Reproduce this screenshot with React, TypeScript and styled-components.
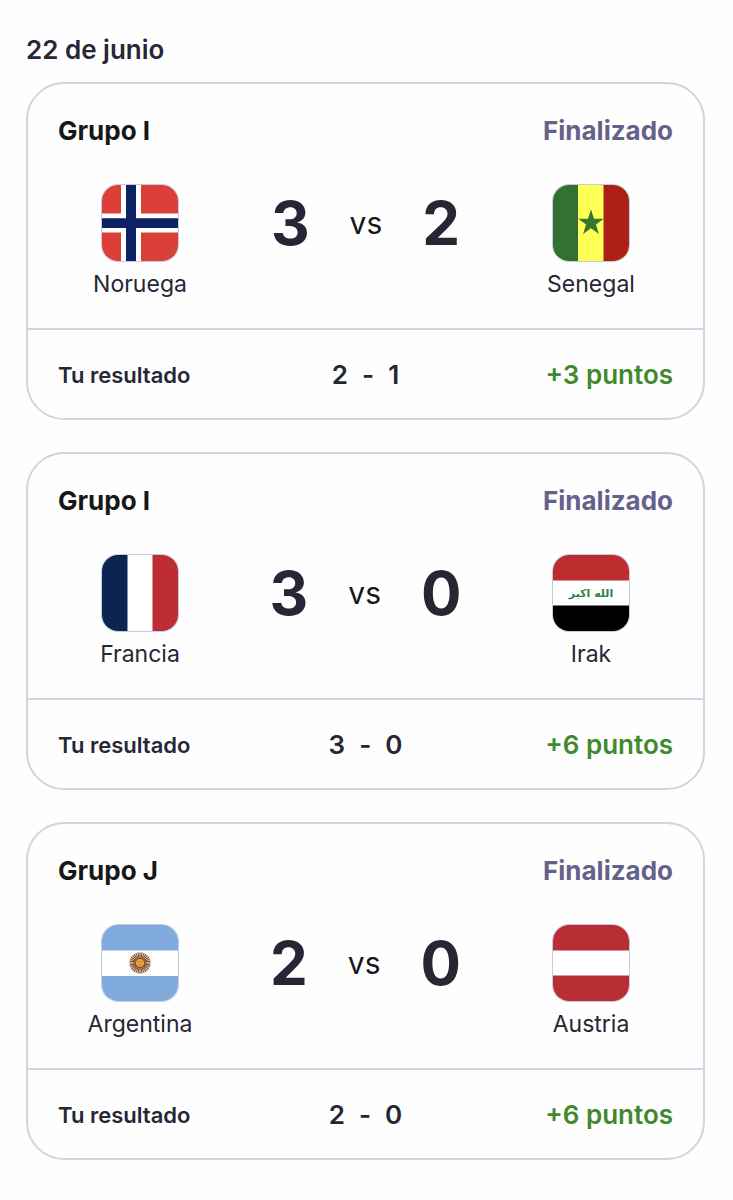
import React from "react";
import styled, { createGlobalStyle } from "styled-components";

const GlobalStyle = createGlobalStyle`
  *, *::before, *::after { box-sizing: border-box; }
  body {
    margin: 0;
    background: #fefefe;
    color: #272635;
    font-family: Inter, "Liberation Sans", sans-serif;
  }
`;

const Page = styled.main`
  border-top: 12px solid #fcfcff;
  border-bottom: 6px solid #fcfcff;
  padding: 22px 28px 34px 26px;
`;

const DayTitle = styled.h2`
  margin: 0 0 16px;
  font-size: 26px;
  line-height: 32px;
  font-weight: 600;
`;

const MatchList = styled.div`
  display: flex;
  flex-direction: column;
  gap: 32px;
`;

const Card = styled.article`
  border: 2px solid #d3d3e2;
  border-radius: 38px;
`;

const CardBody = styled.div`
  padding: 31px 30px 30px;
`;

const CardHeader = styled.header`
  display: flex;
  justify-content: space-between;
  font-size: 26px;
  line-height: 32px;
`;

const Group = styled.h3`
  margin: 0;
  font-size: inherit;
  font-weight: 700;
  color: #171717;
`;

const Status = styled.span`
  font-weight: 700;
  color: #64628a;
`;

const Versus = styled.div`
  display: grid;
  grid-template-columns: 4fr 7fr 4fr;
  margin-top: 37px;
`;

const Team = styled.div`
  display: flex;
  flex-direction: column;
  align-items: center;
  gap: 8px;
  font-size: 23px;
  line-height: 28px;
`;

const FlagFrame = styled.span`
  display: block;
  width: 78px;
  height: 78px;
  border: 1px solid #c6c9e4;
  border-radius: 17px;
  overflow: hidden;

  svg {
    display: block;
    width: 100%;
    height: 100%;
  }
`;

const Score = styled.div`
  display: flex;
  justify-content: center;
  align-items: center;
  gap: 40px;
  height: 78px;
`;

const Goals = styled.span`
  font-size: 60px;
  line-height: 64px;
  font-weight: 700;
`;

const Vs = styled.span`
  font-size: 30px;
  line-height: 32px;
  color: #171717;
`;

const CardFooter = styled.footer`
  display: grid;
  grid-template-columns: 1fr auto 1fr;
  align-items: center;
  padding: 29px 30px 27px;
  border-top: 2px solid #d3d3e2;
  font-size: 26px;
  line-height: 32px;
  font-weight: 600;
`;

const FooterLabel = styled.span`
  font-size: 22px;
`;

const Guess = styled.span`
  display: flex;
  gap: 14px;
`;

const Points = styled.span`
  text-align: right;
  color: #41882f;
`;

type Country = "Noruega" | "Senegal" | "Francia" | "Irak" | "Argentina" | "Austria";

const starPoints = Array.from({ length: 10 }, (_, i) => {
  const r = i % 2 ? 5.2 : 13.5;
  const a = (Math.PI / 5) * i - Math.PI / 2;
  return `${38 + r * Math.cos(a)},${38 + r * Math.sin(a)}`;
}).join(" ");

const rays = Array.from({ length: 32 }, (_, i) => (360 / 32) * i);

const flags: Record<Country, React.ReactNode> = {
  Noruega: (
    <>
      <rect width="76" height="76" fill="#da4038" />
      <path d="M19 0h20v76H19zM0 28.5h76v19H0z" fill="#fff" />
      <path d="M24 0h10v76H24zM0 33.3h76v9.6H0z" fill="#0b2265" />
    </>
  ),
  Senegal: (
    <>
      <rect width="76" height="76" fill="#ffff55" />
      <rect width="25" height="76" fill="#34702f" />
      <rect x="50.5" width="25.5" height="76" fill="#ab2117" />
      <polygon points={starPoints} fill="#34792b" />
    </>
  ),
  Francia: (
    <>
      <rect width="76" height="76" fill="#fff" />
      <rect width="25.5" height="76" fill="#0c2450" />
      <rect x="50.5" width="25.5" height="76" fill="#bd2d33" />
    </>
  ),
  Irak: (
    <>
      <rect width="76" height="76" fill="#fff" />
      <rect width="76" height="25.5" fill="#bd2d30" />
      <rect y="50.5" width="76" height="25.5" fill="#000" />
      <text
        x="38"
        y="42"
        textAnchor="middle"
        fontFamily="DejaVu Sans, sans-serif"
        fontWeight="700"
        fontSize="11"
        fill="#2f7d4b"
      >
        الله اكبر
      </text>
    </>
  ),
  Argentina: (
    <>
      <rect width="76" height="76" fill="#fff" />
      <rect width="76" height="25.5" fill="#80abdc" />
      <rect y="51" width="76" height="25" fill="#80abdc" />
      {rays.map((angle) => (
        <path
          key={angle}
          d="M38 33.5L38 27.3"
          stroke="#7d4a24"
          strokeWidth="1.1"
          transform={`rotate(${angle} 38 38)`}
        />
      ))}
      <circle cx="38" cy="38" r="4.6" fill="#f0a23a" stroke="#84481c" strokeWidth="1" />
      <path
        d="M35.6 37.2h1.6M38.8 37.2h1.6M36.4 39.8q1.6 1 3.2 0"
        fill="none"
        stroke="#a8641f"
        strokeWidth="0.7"
      />
    </>
  ),
  Austria: (
    <>
      <rect width="76" height="76" fill="#fff" />
      <rect width="76" height="25.5" fill="#b92d35" />
      <rect y="50.5" width="76" height="25.5" fill="#b92d35" />
    </>
  ),
};

interface Match {
  group: string;
  home: Country;
  away: Country;
  score: [number, number];
  guess: [number, number];
  points: number;
}

const matches: Match[] = [
  { group: "Grupo I", home: "Noruega", away: "Senegal", score: [3, 2], guess: [2, 1], points: 3 },
  { group: "Grupo I", home: "Francia", away: "Irak", score: [3, 0], guess: [3, 0], points: 6 },
  { group: "Grupo J", home: "Argentina", away: "Austria", score: [2, 0], guess: [2, 0], points: 6 },
];

function TeamBlock({ country }: { country: Country }) {
  return (
    <Team>
      <FlagFrame>
        <svg viewBox="0 0 76 76" aria-hidden="true">
          {flags[country]}
        </svg>
      </FlagFrame>
      <span>{country}</span>
    </Team>
  );
}

function MatchCard({ match }: { match: Match }) {
  return (
    <Card>
      <CardBody>
        <CardHeader>
          <Group>{match.group}</Group>
          <Status>Finalizado</Status>
        </CardHeader>
        <Versus>
          <TeamBlock country={match.home} />
          <Score>
            <Goals>{match.score[0]}</Goals>
            <Vs>vs</Vs>
            <Goals>{match.score[1]}</Goals>
          </Score>
          <TeamBlock country={match.away} />
        </Versus>
      </CardBody>
      <CardFooter>
        <FooterLabel>Tu resultado</FooterLabel>
        <Guess>
          <span>{match.guess[0]}</span>
          <span>-</span>
          <span>{match.guess[1]}</span>
        </Guess>
        <Points>+{match.points} puntos</Points>
      </CardFooter>
    </Card>
  );
}

export default function App() {
  return (
    <>
      <GlobalStyle />
      <Page>
        <DayTitle>22 de junio</DayTitle>
        <MatchList>
          {matches.map((match) => (
            <MatchCard key={match.home} match={match} />
          ))}
        </MatchList>
      </Page>
    </>
  );
}
